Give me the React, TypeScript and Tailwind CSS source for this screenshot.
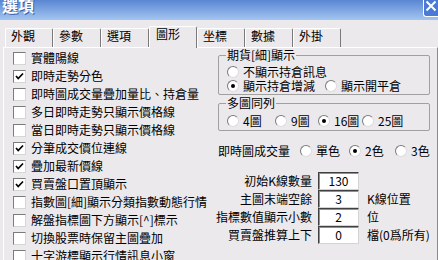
import clsx from "clsx";

const leftItems: [string, boolean][] = [
  ["實體陽線", false],
  ["即時走勢分色", true],
  ["即時圖成交量疊加量比、持倉量", false],
  ["多日即時走勢只顯示價格線", false],
  ["當日即時走勢只顯示價格線", false],
  ["分筆成交價位連線", true],
  ["疊加最新價線", true],
  ["買賣盤口置頂顯示", true],
  ["指數圖[細]顯示分類指數動態行情", false],
  ["解盤指標圖下方顯示[^]標示", false],
  ["切換股票時保留主圖疊加", false],
  ["十字游標顯示行情訊息小窗", false],
];

const tabs = ["外觀", "參數", "選項", "圖形", "坐標", "數據", "外掛"];

const fields = [
  { label: "初始K線數量", value: "130", unit: "" },
  { label: "主圖末端空餘", value: "3", unit: "K線位置" },
  { label: "指標數值顯示小數", value: "2", unit: "位" },
  { label: "買賣盤推算上下", value: "0", unit: "檔(0爲所有)" },
];

function CheckBox({ checked, label }: { checked: boolean; label: string }) {
  return (
    <div className="flex h-[18px] items-center">
      <span className="flex h-[13px] w-[13px] shrink-0 items-center justify-center border border-t-[#7b7b7b] border-l-[#7b7b7b] border-r-[#d6d6d6] border-b-[#d6d6d6] bg-white">
        {checked && (
          <svg width="9" height="9" viewBox="0 0 9 9">
            <path d="M1 4 L3.2 6.5 L8 1.5" stroke="#000" strokeWidth="1.7" fill="none" />
          </svg>
        )}
      </span>
      <span className="ml-[5px] whitespace-nowrap">{label}</span>
    </div>
  );
}

function Radio({ checked, label, className }: { checked?: boolean; label: string; className?: string }) {
  return (
    <div className={clsx("flex shrink-0 items-center", className)}>
      <span className="flex h-[12px] w-[12px] shrink-0 items-center justify-center rounded-full border border-t-[#7b7b7b] border-l-[#7b7b7b] border-r-[#dcdcdc] border-b-[#dcdcdc] bg-white">
        {checked && <span className="h-[4px] w-[4px] rounded-full bg-black" />}
      </span>
      <span className="ml-[4px] whitespace-nowrap">{label}</span>
    </div>
  );
}

export default function App() {
  return (
    <div className="h-[260px] w-[438px] overflow-hidden bg-[#ece9ec] font-['Noto_Sans_CJK_TC','Liberation_Sans',sans-serif] text-[12px] leading-[14px] text-black">
      {/* title bar */}
      <div className="flex h-[20px] justify-between bg-gradient-to-b from-[#5a86d2] to-[#a4c5f0]">
        <span className="-mt-[3px] pl-[2px] text-[16px] font-bold leading-[16px] text-white [text-shadow:1px_1px_0_#3a5fa8]">
          選項
        </span>
        <div className="flex h-[17px] w-[15px] items-end justify-center rounded-bl-[3px] border-b border-l border-white bg-[#4a7ad6] pb-[4px]">
          <svg width="12" height="12" viewBox="0 0 12 12">
            <path d="M1.5 1.5 L10.5 10.5 M10.5 1.5 L1.5 10.5" stroke="#fff" strokeWidth="2" />
          </svg>
        </div>
      </div>

      {/* tabs */}
      <div className="mt-[6px] flex h-[21px] items-end pl-[5px]">
        {tabs.map((t) =>
          t === "圖形" ? (
            <div
              key={t}
              className="relative z-10 -mb-px h-[22px] w-[48px] rounded-t-[2px] border-t border-l border-r border-t-white border-l-white border-r-[#7a7a7a] bg-[#ece9ec] pl-[6px] leading-[12px]"
            >
              <span className="relative top-[1px]">{t}</span>
            </div>
          ) : (
            <div
              key={t}
              className="h-[19px] w-[48px] rounded-t-[2px] border-t border-l border-r border-t-white border-l-white border-r-[#7a7a7a] pl-[5px] leading-[12px]"
            >
              <span className="relative top-[1px]">{t}</span>
            </div>
          )
        )}
      </div>

      {/* panel */}
      <div className="ml-[3px] flex h-full border-t border-l border-r border-t-white border-l-white border-r-[#8a8a8a]">
        <div className="w-[214px] pl-[9px] pt-px">
          {leftItems.map(([label, checked]) => (
            <CheckBox key={label} label={label} checked={checked} />
          ))}
        </div>

        <div className="w-[212px]">
          <fieldset className="rounded-[2px] border border-[#a0a0a0] pb-px pl-[8px]">
            <legend className="-ml-[1px] px-[1px] leading-[14px]">期貨[細]顯示</legend>
            <div className="pt-[3px]">
              <div className="flex h-[14px] items-center">
                <Radio label="不顯示持倉訊息" />
              </div>
              <div className="flex h-[14px] items-center">
                <Radio label="顯示持倉增減" checked className="w-[98px]" />
                <Radio label="顯示開平倉" />
              </div>
            </div>
          </fieldset>

          <fieldset className="mt-px rounded-[2px] border border-[#a0a0a0] pb-px pl-[8px]">
            <legend className="-ml-[1px] px-[1px] leading-[14px]">多圖同列</legend>
            <div className="flex h-[16px] items-center pt-0 mt-[3px]">
              <Radio label="4圖" className="w-[48px]" />
              <Radio label="9圖" className="w-[43px]" />
              <Radio label="16圖" checked className="w-[44px]" />
              <Radio label="25圖" />
            </div>
          </fieldset>

          <div className="mt-[12px] flex h-[16px] items-center">
            <span className="w-[82px] whitespace-nowrap">即時圖成交量</span>
            <Radio label="單色" className="w-[49px]" />
            <Radio label="2色" checked className="w-[46px]" />
            <Radio label="3色" />
          </div>

          <div className="mt-[13px]">
            {fields.map((f) => (
              <div key={f.label} className="flex h-[18px] items-center">
                <span className="flex w-[94px] justify-end whitespace-nowrap">{f.label}</span>
                <span className="ml-[6px] flex h-[18px] w-[41px] items-center justify-center border border-t-[#404040] border-l-[#404040] border-r-[#d4d4d4] border-b-[#d4d4d4] bg-white shadow-[inset_1px_1px_0_#909090]">
                  {f.value}
                </span>
                <span className="ml-[8px] whitespace-nowrap">{f.unit}</span>
              </div>
            ))}
          </div>
        </div>
      </div>
    </div>
  );
}
